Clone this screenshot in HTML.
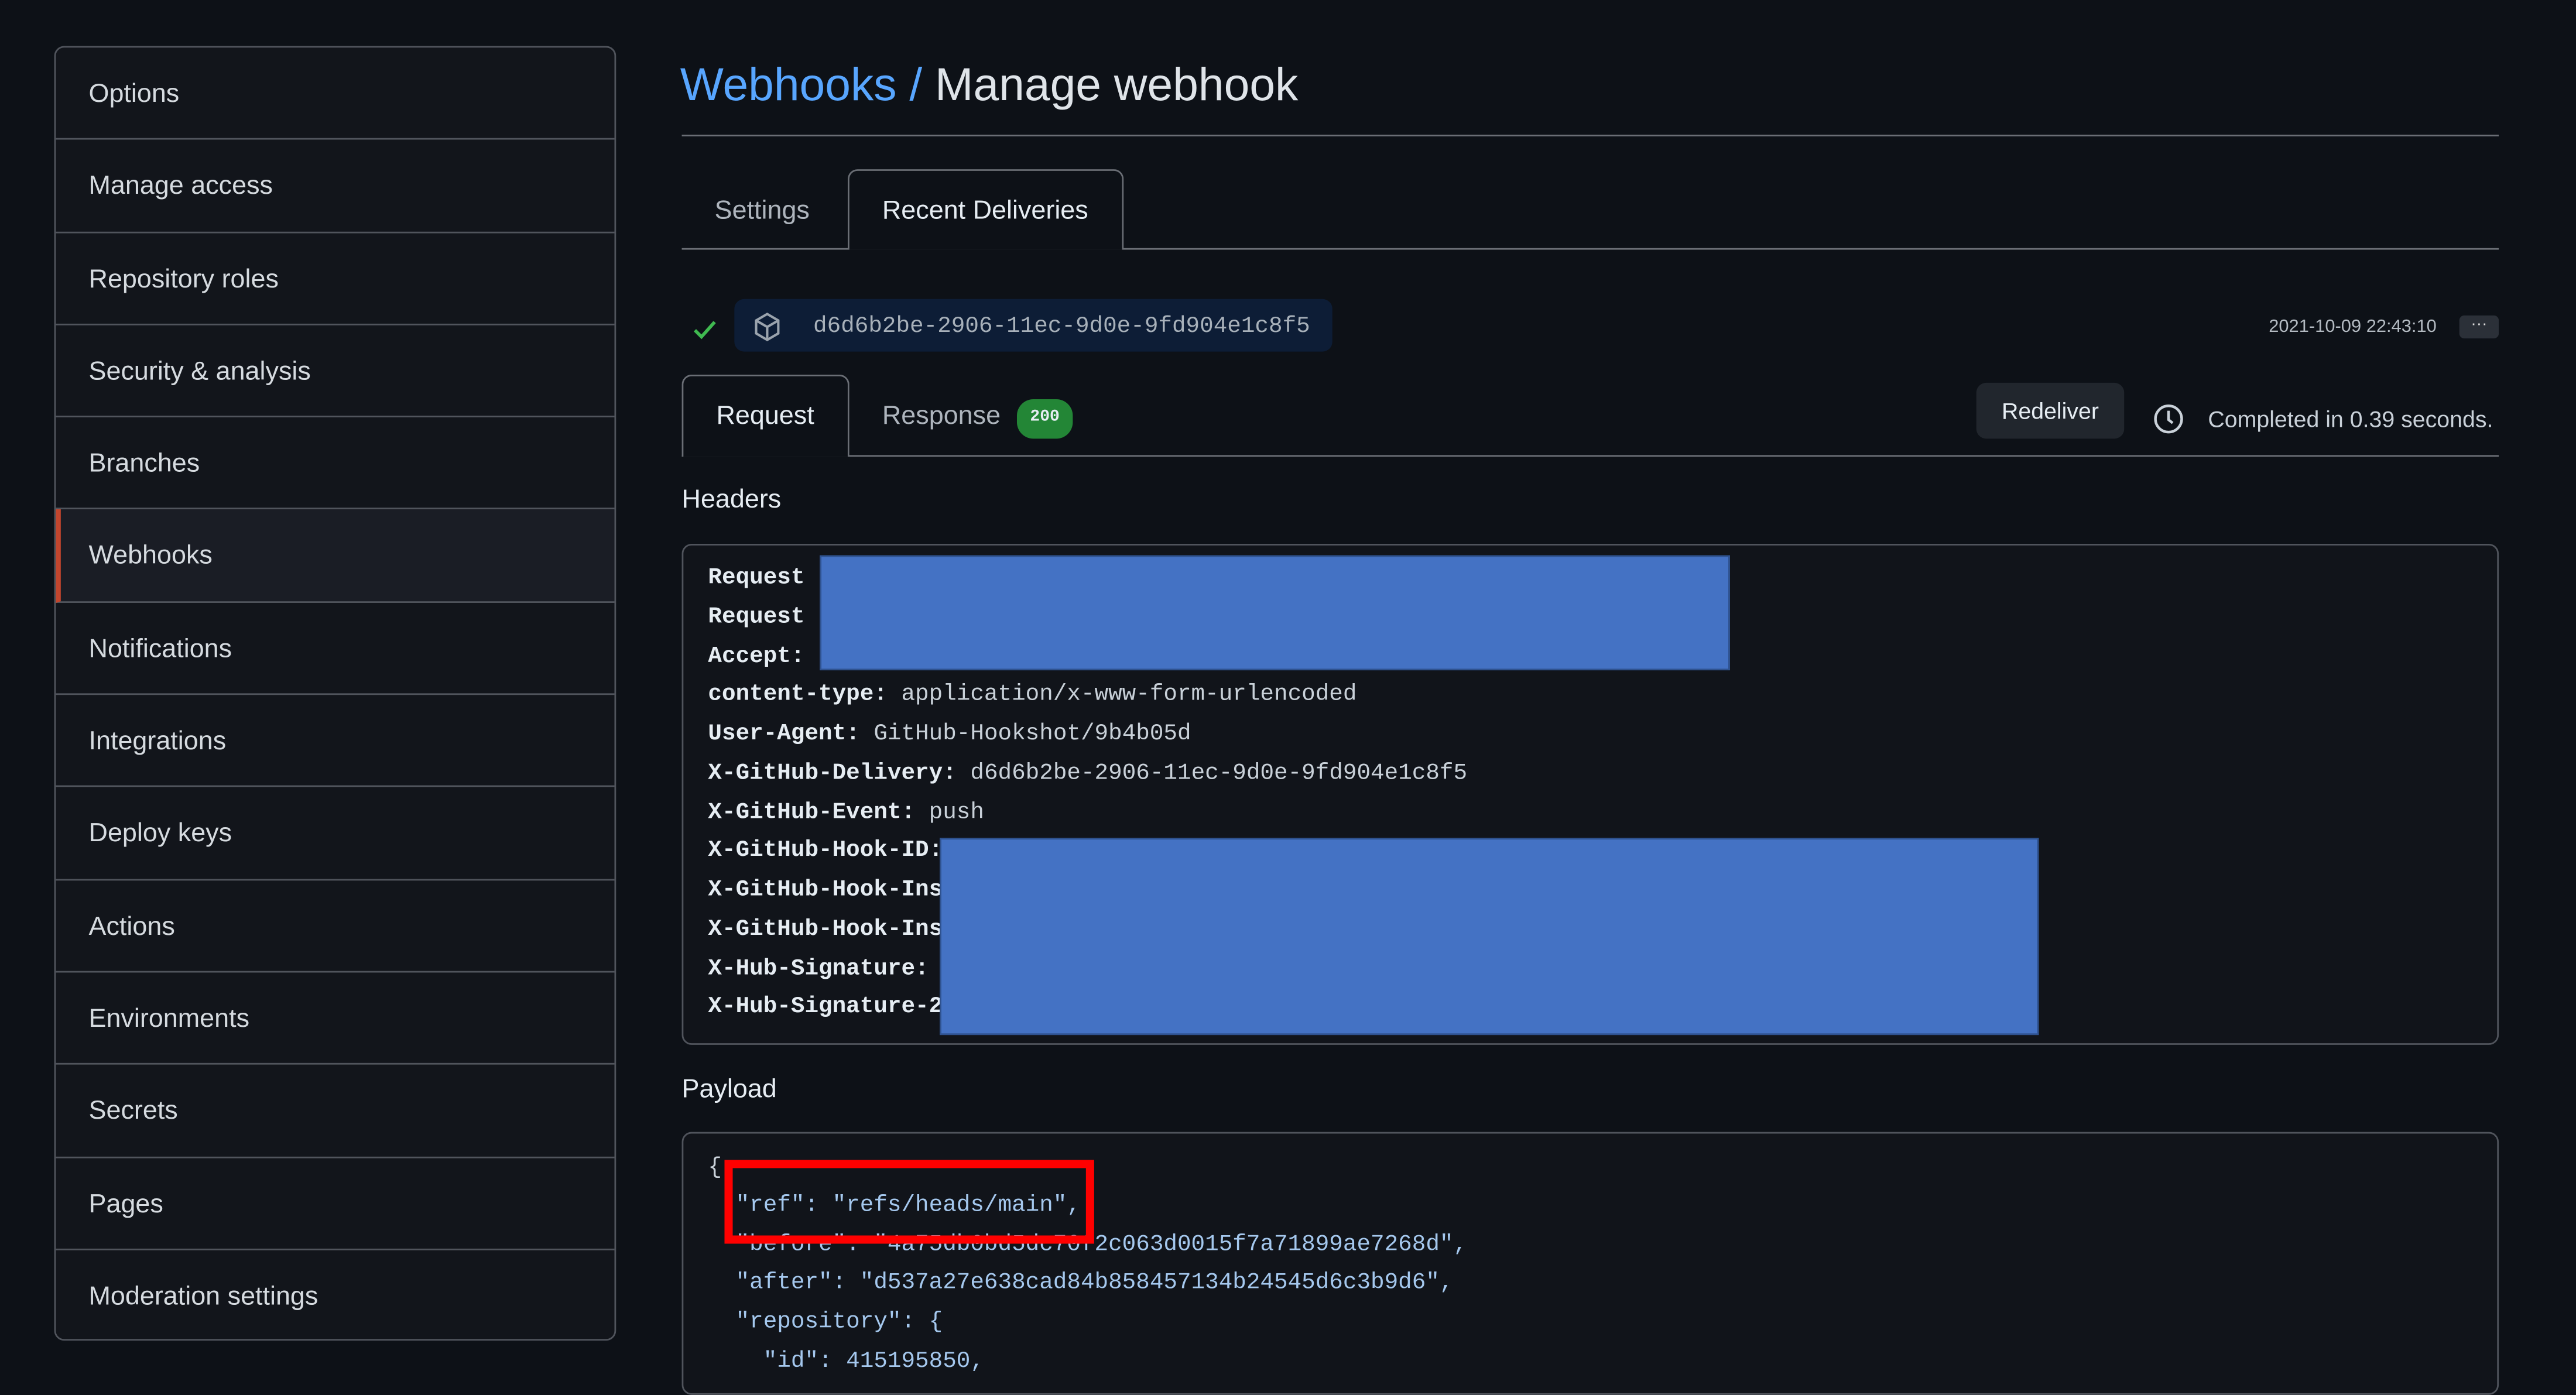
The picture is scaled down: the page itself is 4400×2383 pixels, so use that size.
<!DOCTYPE html>
<html><head><meta charset="utf-8"><style>
html,body{margin:0;padding:0;background:#0d1117;width:4400px;height:2335px;overflow:hidden}
#w{position:absolute;left:0;top:0;width:1568px;height:832px;transform:scale(2.8061,2.8065);transform-origin:0 0;font-family:"Liberation Sans",sans-serif;color:#c9d1d9}
.a{position:absolute}
.side{left:33px;top:28px;width:342px;height:788px;border:1px solid #50545c;border-radius:6px;overflow:hidden;background:#12151b;box-sizing:border-box}
.it{height:56.3px;border-bottom:1px solid #50545c;box-sizing:border-box;padding-left:20px;line-height:58px;font-size:16px;color:#d6dbe0}
.it.sel{background:#1a1d25;border-left:3px solid #c2452d;padding-left:17px}
.hr{position:absolute;height:1px;background:#6a6e75}
.mono{font-family:"Liberation Mono",monospace}
.hb{left:415px;width:1106px;border:1px solid #50545c;border-radius:6px;background:#11141a;box-sizing:border-box}
.ln{position:absolute;left:15px;font-size:14px;white-space:pre;color:#c9d1d9}
.ln b{color:#e6edf3}
.red{background:#4472c4;border:1px solid #2f528f;box-sizing:border-box}
.pl{color:#a5c8ee}
</style></head><body><div id="w">
<div class="a side">
<div class="it">Options</div><div class="it">Manage access</div><div class="it">Repository roles</div><div class="it">Security &amp; analysis</div><div class="it">Branches</div><div class="it sel">Webhooks</div><div class="it">Notifications</div><div class="it">Integrations</div><div class="it">Deploy keys</div><div class="it">Actions</div><div class="it">Environments</div><div class="it">Secrets</div><div class="it">Pages</div><div class="it" style="border-bottom:none">Moderation settings</div>
</div>
<div class="a" style="left:414px;top:36px;font-size:28px;white-space:nowrap"><span style="color:#58a6ff">Webhooks /</span> <span style="color:#dfe4e9">Manage webhook</span></div>
<div class="hr" style="left:415px;top:82px;width:1106px"></div>
<div class="a" style="left:435px;top:120px;font-size:16px;color:#aeb5bd">Settings</div>
<div class="a" style="left:516px;top:103px;width:168px;height:49px;border:1px solid #6a6e75;border-bottom:none;border-radius:6px 6px 0 0;box-sizing:border-box;background:#0d1117;z-index:2"></div>
<div class="a" style="left:537px;top:120px;font-size:16px;color:#e6edf3;z-index:3">Recent Deliveries</div>
<div class="hr" style="left:415px;top:151px;width:1106px"></div>
<svg class="a" style="left:421px;top:192px" width="16" height="16" viewBox="0 0 16 16"><path d="M2 9l4 4 8-9" stroke="#3fb950" stroke-width="2" fill="none"/></svg>
<div class="a" style="left:447px;top:182px;width:364px;height:32px;background:#0d1d36;border-radius:6px"></div>
<svg class="a" style="left:458px;top:190px" width="18" height="18" viewBox="0 0 16 16"><path d="M8 1L14 4.5V11.5L8 15L2 11.5V4.5Z M2 4.5L8 8L14 4.5 M8 8V15" stroke="#9aa3ad" stroke-width="1.3" fill="none"/></svg>
<div class="a mono" style="left:495px;top:191px;font-size:14px;color:#a8b1ba">d6d6b2be-2906-11ec-9d0e-9fd904e1c8f5</div>
<div class="a" style="left:1381px;top:193px;font-size:11px;color:#b3bac1">2021-10-09 22:43:10</div>
<div class="a" style="left:1497px;top:192px;width:24px;height:14px;background:#2b3038;border-radius:3px;color:#ddd;font-size:10px;text-align:center;line-height:12px">···</div>
<div class="a" style="left:415px;top:228px;width:102px;height:50px;border:1px solid #6a6e75;border-bottom:none;border-radius:6px 6px 0 0;box-sizing:border-box;background:#0d1117;z-index:2"></div>
<div class="a" style="left:436px;top:245px;font-size:16px;color:#e6edf3;z-index:3">Request</div>
<div class="a" style="left:537px;top:245px;font-size:16px;color:#aeb5bd">Response</div>
<div class="a mono" style="left:619px;top:243px;width:34px;height:24px;background:#238636;border-radius:10px;color:#e6edf3;font-size:10px;text-align:center;line-height:24px;font-weight:bold">200</div>
<div class="a" style="left:1203px;top:233px;width:90px;height:34px;background:#21262d;border-radius:6px;color:#e6edf3;font-size:14px;text-align:center;line-height:34px">Redeliver</div>
<svg class="a" style="left:1310px;top:245px" width="20" height="20" viewBox="0 0 20 20"><circle cx="10" cy="10" r="8" stroke="#c9d1d9" stroke-width="1.6" fill="none"/><path d="M10 5V10.5L12.5 12.5" stroke="#c9d1d9" stroke-width="1.6" fill="none"/></svg>
<div class="a" style="left:1344px;top:247px;font-size:14px;color:#c9d1d9;white-space:nowrap">Completed in 0.39 seconds.</div>
<div class="hr" style="left:415px;top:277px;width:1106px"></div>
<div class="a" style="left:415px;top:296px;font-size:16px;color:#e6edf3">Headers</div>
<div class="a hb" style="top:331px;height:305px">
<div class="ln mono" style="top:12px"><b>Request</b></div>
<div class="ln mono" style="top:36px"><b>Request</b></div>
<div class="ln mono" style="top:60px"><b>Accept:</b></div>
<div class="ln mono" style="top:83px"><b>content-type:</b> application/x-www-form-urlencoded</div>
<div class="ln mono" style="top:107px"><b>User-Agent:</b> GitHub-Hookshot/9b4b05d</div>
<div class="ln mono" style="top:131px"><b>X-GitHub-Delivery:</b> d6d6b2be-2906-11ec-9d0e-9fd904e1c8f5</div>
<div class="ln mono" style="top:155px"><b>X-GitHub-Event:</b> push</div>
<div class="ln mono" style="top:178px"><b>X-GitHub-Hook-ID:</b></div>
<div class="ln mono" style="top:202px"><b>X-GitHub-Hook-Ins</b></div>
<div class="ln mono" style="top:226px"><b>X-GitHub-Hook-Ins</b></div>
<div class="ln mono" style="top:250px"><b>X-Hub-Signature:</b></div>
<div class="ln mono" style="top:273px"><b>X-Hub-Signature-2</b></div>
</div>
<div class="a red" style="left:499px;top:338px;width:554px;height:70px"></div>
<div class="a red" style="left:572px;top:510px;width:669px;height:120px"></div>
<div class="a" style="left:415px;top:655px;font-size:16px;color:#e6edf3">Payload</div>
<div class="a hb" style="top:689px;height:160px">
<div class="ln mono" style="top:13px">{</div>
<div class="ln mono pl" style="top:36px">  "ref": "refs/heads/main",</div>
<div class="ln mono pl" style="top:60px">  "before": "4a75db0bd5dc70f2c063d0015f7a71899ae7268d",</div>
<div class="ln mono pl" style="top:83px">  "after": "d537a27e638cad84b858457134b24545d6c3b9d6",</div>
<div class="ln mono pl" style="top:107px">  "repository": {</div>
<div class="ln mono pl" style="top:131px">    "id": 415195850,</div>
</div>
<div class="a" style="left:441px;top:706px;width:225px;height:51px;border:5px solid #f00;box-sizing:border-box"></div>
</div></body></html>
